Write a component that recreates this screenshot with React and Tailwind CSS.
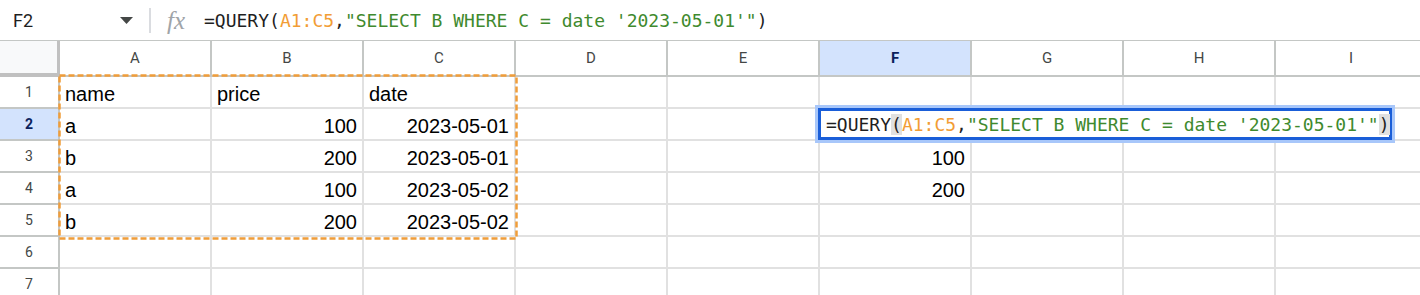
const cols = ['A', 'B', 'C', 'D', 'E', 'F', 'G', 'H', 'I'];

const rows = [
  { n: 1, cells: { A: 'name', B: 'price', C: 'date' } },
  { n: 2, cells: { A: 'a', B: '100', C: '2023-05-01' }, active: true },
  { n: 3, cells: { A: 'b', B: '200', C: '2023-05-01', F: '100' } },
  { n: 4, cells: { A: 'a', B: '100', C: '2023-05-02', F: '200' } },
  { n: 5, cells: { A: 'b', B: '200', C: '2023-05-02' } },
  { n: 6, cells: {} },
  { n: 7, cells: {} },
];

const rightAligned = (v) => /^[0-9-]+$/.test(v);

function Formula({ highlightParens }) {
  const paren = highlightParens ? 'bg-[#e0e0e0]' : '';
  return (
    <span className="font-['DejaVu_Sans_Mono',monospace] text-[18px] whitespace-pre text-[#1f1f1f]">
      =QUERY<span className={paren}>(</span>
      <span className="text-[#f29d35]">A1:C5</span>,
      <span className="text-[#3f8a2e]">"SELECT B WHERE C = date '2023-05-01'"</span>
      <span className={paren}>)</span>
    </span>
  );
}

function FormulaBar() {
  return (
    <div className="flex h-[41px] items-center border-b border-[#c4c7c5] bg-white">
      <div className="flex w-[149px] items-center pl-[13px] pr-[16px]">
        <span className="font-['Roboto',sans-serif] text-[18px] text-[#1f1f1f]">F2</span>
        <svg className="ml-auto" width="13" height="7" viewBox="0 0 13 7">
          <path d="M0 0h13L6.5 7z" fill="#444746" />
        </svg>
      </div>
      <div className="h-[25px] w-[2px] bg-[#dadce0]" />
      <span className="ml-[16px] mr-[13px] w-[24px] font-['Liberation_Serif',serif] text-[25px] italic leading-none text-[#a0a4a8]">
        fx
      </span>
      <Formula />
    </div>
  );
}

export default function App() {
  return (
    <div className="h-[295px] w-[1420px] overflow-hidden bg-white font-['Liberation_Sans',Arial,sans-serif]">
      <FormulaBar />
      <div className="relative">
        <div className="flex h-[36px]">
          <div className="h-[36px] w-[60px] shrink-0 border-b-[4px] border-r-[3px] border-[#c0c0c0] bg-[#f8f9fa]" />
          {cols.map((c) => (
            <div
              key={c}
              className={
                'flex h-[36px] w-[152px] shrink-0 items-center justify-center border-b-2 border-r-2 border-[#c4c7c5] font-[\'Roboto\',sans-serif] text-[15px] ' +
                (c === 'F' ? 'bg-[#d3e3fd] font-bold text-[#0b1f5c]' : 'text-[#444746]')
              }
            >
              {c}
            </div>
          ))}
        </div>

        {rows.map((r) => (
          <div key={r.n} className="flex h-[32px]">
            <div
              className={
                'flex h-[32px] w-[60px] shrink-0 items-center justify-center border-b-2 border-r-2 border-[#c4c7c5] font-[\'Roboto\',sans-serif] text-[14px] ' +
                (r.active ? 'bg-[#d3e3fd] font-bold text-[#0b1f5c]' : 'text-[#444746]')
              }
            >
              {r.n}
            </div>
            {cols.map((c) => {
              const v = r.cells[c];
              return (
                <div
                  key={c}
                  className={
                    'flex h-[32px] w-[152px] shrink-0 items-end border-b-2 border-r-2 border-[#e1e1e1] px-[5px] pb-px text-[20px] leading-[23px] text-black ' +
                    (v && rightAligned(v) ? 'justify-end' : 'justify-start')
                  }
                >
                  {v}
                </div>
              );
            })}
          </div>
        ))}

        {/* copy marquee around A1:C5 */}
        <svg className="pointer-events-none absolute left-[58px] top-[33px]" width="460" height="166">
          <rect x="1.5" y="1.5" width="457" height="163" fill="none" stroke="#f09d3a" strokeWidth="2.5" strokeDasharray="6 3" />
        </svg>

        {/* in-cell editor on F2 */}
        <div className="absolute left-[815px] top-[64px] h-[38px] w-[580px] border-[3px] border-[#a8c7fa]">
          <div className="flex h-full items-center border-[3px] border-[#1a5ed8] bg-white pl-[5px]">
            <Formula highlightParens />
          </div>
        </div>
      </div>
    </div>
  );
}
